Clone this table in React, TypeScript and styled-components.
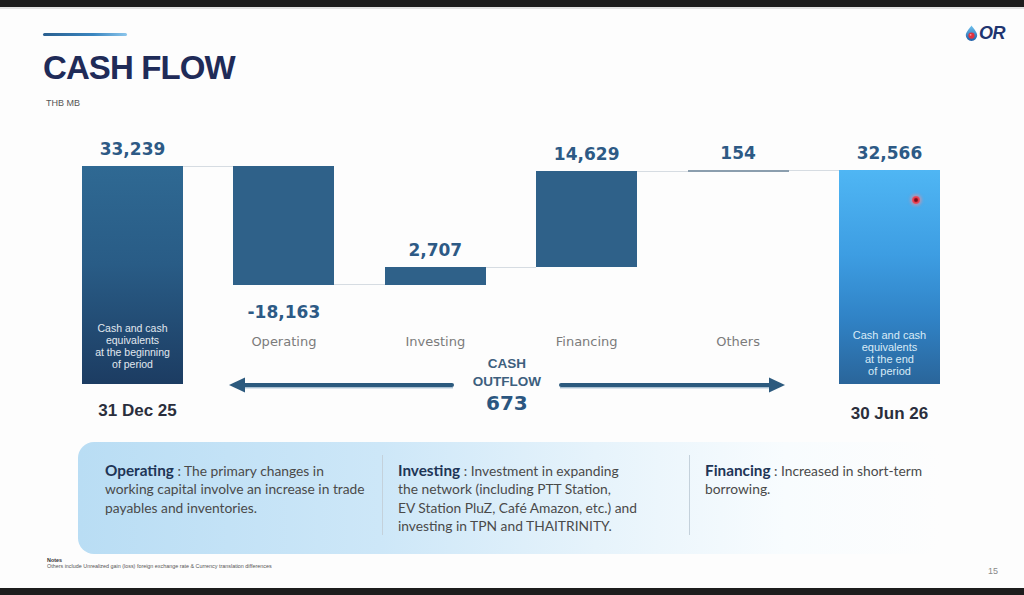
import React from "react";
import styled, { createGlobalStyle } from "styled-components";

const GlobalStyle = createGlobalStyle`
  html, body {
    margin: 0;
    padding: 0;
  }
  body {
    background: #1d1d1d;
    width: 1024px;
    height: 595px;
    overflow: hidden;
    font-family: "Liberation Sans", Arial, sans-serif;
  }
  #root {
    padding-top: 7px;
  }
`;

// waterfall scale: 33,239 is drawn 218px tall, baseline sits at y=384
const SCALE = 218 / 33239;
const BASE_Y = 384;
const CHART_TOP = 134;
const LABEL_BLOCK = 28;
const GAP = 50.4;

const yOf = (v: number) => BASE_Y - v * SCALE;

type Step = { name: string; label: string; from: number; to: number; muted?: boolean };

const steps: Step[] = [
  { name: "Operating", label: "-18,163", from: 33239, to: 15076 },
  { name: "Investing", label: "2,707", from: 15076, to: 17783 },
  { name: "Financing", label: "14,629", from: 17783, to: 32412 },
  { name: "Others", label: "154", from: 32412, to: 32566, muted: true },
];

const OPENING = 33239;
const CLOSING = 32566;

function App() {
  const openTop = yOf(OPENING);
  const closeTop = yOf(CLOSING);

  return (
    <>
      <GlobalStyle />
      <Slide>
        <Header>
          <AccentLine />
          <Logo>
            <svg width="13" height="16" viewBox="0 0 13 16">
              <defs>
                <linearGradient id="drop" x1="0" y1="0" x2="0" y2="1">
                  <stop offset="0" stopColor="#6fc3ef" />
                  <stop offset="1" stopColor="#1f5fa8" />
                </linearGradient>
              </defs>
              <path d="M6.5 0.5 C5 3 0.8 7 0.8 10.2 A5.7 5.7 0 0 0 12.2 10.2 C12.2 7 8 3 6.5 0.5 Z" fill="url(#drop)" />
              <circle cx="6.5" cy="10.6" r="3.1" fill="#e2323f" />
              <circle cx="5.6" cy="9.8" r="0.9" fill="#f59aa2" />
            </svg>
            <LogoText>OR</LogoText>
          </Logo>
        </Header>
        <Title>CASH FLOW</Title>
        <Unit>THB MB</Unit>

        <ChartRow>
          <EndColumn>
            <ValueLabel style={{ marginTop: openTop - CHART_TOP - LABEL_BLOCK }}>33,239</ValueLabel>
            <EndBar $tone="start" $connect style={{ height: OPENING * SCALE }}>
              <BarNote $pb={14}>
                Cash and cash
                <br />
                equivalents
                <br />
                at the beginning
                <br />
                of period
              </BarNote>
            </EndBar>
            <DateLabel $gap={16} $shift={10}>31 Dec 25</DateLabel>
          </EndColumn>

          <Middle>
            <Plot>
              {steps.map((s) => {
                const hi = Math.max(s.from, s.to);
                const top = yOf(hi);
                const h = Math.max(Math.abs(s.to - s.from) * SCALE, 2);
                const down = s.to < s.from;
                return (
                  <StepColumn key={s.name}>
                    {down ? (
                      <>
                        <StepBar $connect="bottom" style={{ marginTop: top - CHART_TOP, height: h }} />
                        <ValueLabel $below>{s.label}</ValueLabel>
                      </>
                    ) : (
                      <>
                        <ValueLabel style={{ marginTop: top - CHART_TOP - LABEL_BLOCK }}>{s.label}</ValueLabel>
                        <StepBar $connect="top" $muted={s.muted} style={{ height: h }} />
                      </>
                    )}
                    <CategoryLabel>{s.name}</CategoryLabel>
                  </StepColumn>
                );
              })}
            </Plot>
            <FlowRow>
              <svg width="225" height="16" viewBox="0 0 225 16">
                <rect x="12" y="6" width="213" height="4" rx="2" fill="#2c5a7e" />
                <rect x="14" y="10" width="210" height="1.4" fill="#a9c0d2" />
                <polygon points="0,8 16,0.5 16,15.5" fill="#2c5a7e" />
              </svg>
              <FlowText>
                <FlowTitle>
                  CASH
                  <br />
                  OUTFLOW
                </FlowTitle>
                <FlowValue>673</FlowValue>
              </FlowText>
              <svg width="226" height="16" viewBox="0 0 226 16">
                <rect x="0" y="6" width="214" height="4" rx="2" fill="#2c5a7e" />
                <rect x="1" y="10" width="210" height="1.4" fill="#a9c0d2" />
                <polygon points="226,8 210,0.5 210,15.5" fill="#2c5a7e" />
              </svg>
            </FlowRow>
          </Middle>

          <EndColumn>
            <ValueLabel style={{ marginTop: closeTop - CHART_TOP - LABEL_BLOCK }}>32,566</ValueLabel>
            <EndBar $tone="end" style={{ height: CLOSING * SCALE }}>
              <LaserDot />
              <BarNote $pb={7} $light>
                Cash and cash
                <br />
                equivalents
                <br />
                at the end
                <br />
                of period
              </BarNote>
            </EndBar>
            <DateLabel $gap={19}>30 Jun 26</DateLabel>
          </EndColumn>
        </ChartRow>

        <InfoBox>
          <InfoCol $width={304} $pl={27}>
            <InfoLabel>Operating</InfoLabel> : The primary changes in
            <br />
            working capital involve an increase in trade
            <br />
            payables and inventories.
          </InfoCol>
          <Divider />
          <InfoCol $width={306} $pl={15}>
            <InfoLabel>Investing</InfoLabel> : Investment in expanding
            <br />
            the network (including PTT Station,
            <br />
            EV Station PluZ, Café Amazon, etc.) and
            <br />
            investing in TPN and THAITRINITY.
          </InfoCol>
          <Divider />
          <InfoCol $pl={15}>
            <InfoLabel>Financing</InfoLabel> : Increased in short-term
            <br />
            borrowing.
          </InfoCol>
        </InfoBox>

        <Footer>
          <Notes>
            <strong>Notes</strong>
            <br />
            Others include Unrealized gain (loss) foreign exchange rate &amp; Currency translation differences
          </Notes>
          <PageNo>15</PageNo>
        </Footer>
      </Slide>
    </>
  );
}

export default App;

const Slide = styled.div`
  width: 1024px;
  height: 581px;
  box-sizing: border-box;
  background: #fdfdfd;
  border-top: 2px solid #e3e3e3;
  padding: 16px 19px 0 43px;
  display: flex;
  flex-direction: column;
`;

const Header = styled.div`
  display: flex;
  justify-content: space-between;
  align-items: flex-start;
  height: 16px;
`;

const AccentLine = styled.div`
  margin-top: 8px;
  width: 84px;
  height: 3px;
  border-radius: 2px;
  background: linear-gradient(90deg, #2a5f8f 0%, #3a86c0 60%, #8cc6ec 100%);
`;

const Logo = styled.div`
  display: flex;
  align-items: center;
  gap: 1px;
  height: 16px;
`;

const LogoText = styled.span`
  font-family: "Liberation Sans", Arial, sans-serif;
  font-size: 18px;
  font-weight: 900;
  font-style: italic;
  line-height: 16px;
  color: #1f3570;
  letter-spacing: -0.5px;
`;

const Title = styled.h1`
  margin: 10px 0 0;
  font-family: "Liberation Sans", Arial, sans-serif;
  font-size: 33px;
  line-height: 33px;
  font-weight: 700;
  letter-spacing: -0.9px;
  color: #1f2b58;
`;

const Unit = styled.div`
  margin: 13px 0 0 3px;
  font-size: 9px;
  line-height: 12px;
  color: #555;
`;

const ChartRow = styled.div`
  margin: 25px 0 0 39px;
  height: 291px;
  display: flex;
  align-items: flex-start;
  gap: ${GAP}px;
`;

const EndColumn = styled.div`
  width: 101px;
  display: flex;
  flex-direction: column;
`;

const ValueLabel = styled.div<{ $below?: boolean }>`
  height: 22px;
  line-height: 22px;
  margin-top: ${(p) => (p.$below ? "16px" : "0")};
  margin-bottom: ${(p) => (p.$below ? "0" : "6px")};
  text-align: center;
  white-space: nowrap;
  font-family: "DejaVu Sans", Verdana, sans-serif;
  font-weight: 700;
  font-size: 17px;
  color: #2d5a85;
`;

const EndBar = styled.div<{ $tone: "start" | "end"; $connect?: boolean }>`
  position: relative;
  display: flex;
  flex-direction: column;
  justify-content: flex-end;
  background: ${(p) =>
    p.$tone === "start"
      ? "linear-gradient(180deg, #2f6993 0%, #295c86 45%, #1c3c62 100%)"
      : "linear-gradient(180deg, #4fb6f4 0%, #3d9de2 40%, #3082c5 70%, #2a659a 100%)"};

  &::after {
    content: "";
    display: ${(p) => (p.$connect ? "block" : "none")};
    position: absolute;
    left: 100%;
    top: 0;
    width: ${GAP}px;
    height: 1px;
    background: #d6dce2;
  }
`;

const BarNote = styled.div<{ $pb: number; $light?: boolean }>`
  padding: 0 4px ${(p) => p.$pb}px;
  text-align: center;
  font-family: "Liberation Sans", Arial, sans-serif;
  font-size: ${(p) => (p.$light ? "11px" : "10.5px")};
  line-height: 12px;
  color: ${(p) => (p.$light ? "#d9ebf7" : "#e1e8ef")};
`;

const LaserDot = styled.span`
  position: absolute;
  left: 73px;
  top: 26px;
  width: 8px;
  height: 8px;
  border-radius: 50%;
  background: radial-gradient(circle, #7d0d1b 0 22%, #e5394c 45%, #ef7c88 100%);
  box-shadow: 0 0 3px 2px rgba(240, 140, 150, 0.55);
`;

const DateLabel = styled.div<{ $gap: number; $shift?: number }>`
  margin-top: ${(p) => p.$gap}px;
  padding-left: ${(p) => p.$shift ?? 0}px;
  height: 22px;
  line-height: 22px;
  text-align: center;
  white-space: nowrap;
  font-family: "Liberation Sans", Arial, sans-serif;
  font-weight: 700;
  font-size: 17px;
  color: #2a2e3c;
`;

const Middle = styled.div`
  width: ${4 * 101 + 3 * GAP}px;
  display: flex;
  flex-direction: column;
`;

const Plot = styled.div`
  height: 219px;
  display: flex;
  gap: ${GAP}px;
`;

const StepColumn = styled.div`
  width: 101px;
  display: flex;
  flex-direction: column;
`;

const StepBar = styled.div<{ $connect: "top" | "bottom" | "none"; $muted?: boolean }>`
  position: relative;
  background: ${(p) => (p.$muted ? "#8b9eae" : "#2f6189")};

  &::after {
    content: "";
    position: absolute;
    left: 100%;
    ${(p) => (p.$connect === "bottom" ? "bottom: 0;" : "top: 0;")}
    width: ${GAP}px;
    height: 1px;
    background: #d6dce2;
  }
`;

const CategoryLabel = styled.div`
  margin-top: auto;
  margin-bottom: 2px;
  text-align: center;
  font-family: "DejaVu Sans", Verdana, sans-serif;
  font-size: 13px;
  line-height: 18px;
  color: #7b7b7b;
`;

const FlowRow = styled.div`
  margin-left: -4px;
  width: 556px;
  height: 64px;
  display: flex;
  align-items: center;
`;

const FlowText = styled.div`
  width: 105px;
  text-align: center;
`;

const FlowTitle = styled.div`
  font-family: "Liberation Sans", Arial, sans-serif;
  font-weight: 700;
  font-size: 13.5px;
  line-height: 18px;
  color: #3d5f7e;
`;

const FlowValue = styled.div`
  font-family: "DejaVu Sans", Verdana, sans-serif;
  font-weight: 700;
  font-size: 20px;
  line-height: 24px;
  color: #2b5680;
`;

const InfoBox = styled.div`
  margin: 17px 0 0 35px;
  width: 862px;
  height: 112px;
  box-sizing: border-box;
  border-radius: 16px;
  background: linear-gradient(90deg, #b9ddf4 0%, #cde7f8 35%, #e6f3fb 60%, #f8fcfe 82%, #fdfdfd 100%);
  display: flex;
`;

const InfoCol = styled.div<{ $width?: number; $pl: number }>`
  ${(p) => (p.$width ? `width: ${p.$width}px;` : "flex: 1;")}
  box-sizing: border-box;
  padding: 19px 0 0 ${(p) => p.$pl}px;
  white-space: nowrap;
  font-family: Lato, "Open Sans", sans-serif;
  font-size: 13.8px;
  line-height: 18.3px;
  color: #4a4a4a;
`;

const InfoLabel = styled.span`
  font-weight: 700;
  font-size: 15.3px;
  color: #1e3556;
`;

const Divider = styled.div`
  width: 1px;
  margin: 13px 0 19px;
  background: #c4d1db;
`;

const Footer = styled.div`
  margin-top: 4px;
  padding: 0 7px 0 4px;
  display: flex;
  justify-content: space-between;
  align-items: flex-start;
`;

const Notes = styled.div`
  font-family: "Liberation Sans", Arial, sans-serif;
  font-size: 5.4px;
  line-height: 5.5px;
  color: #555;

  strong {
    color: #333;
  }
`;

const PageNo = styled.div`
  margin-top: 8px;
  font-family: "Liberation Sans", Arial, sans-serif;
  font-size: 9px;
  line-height: 10px;
  color: #8a8a8a;
`;
